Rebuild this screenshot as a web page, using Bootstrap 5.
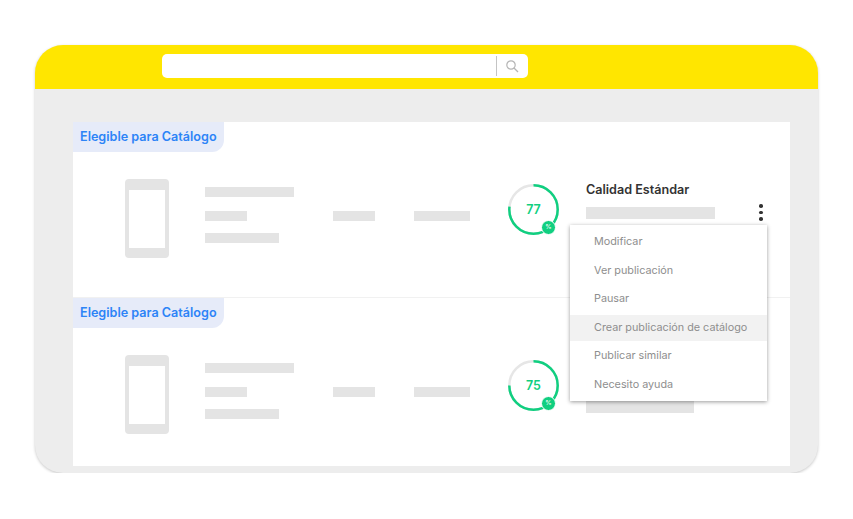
<!DOCTYPE html>
<html lang="es">
<head>
  <meta charset="UTF-8" />
  <meta name="viewport" content="width=device-width, initial-scale=1" />
  <title>Elegible para Catálogo</title>
  <link href="https://cdn.jsdelivr.net/npm/bootstrap@5.3.3/dist/css/bootstrap.min.css" rel="stylesheet" />
  <style>
    body {
      background: #fff;
      padding: 45px 35px 0;
      font-family: "Inter", "Liberation Sans", sans-serif;
    }
    .ventana {
      width: 783px;
      height: 428px;
      background: #ededed;
      border-radius: 28px;
      box-shadow: 0 1px 3px rgba(0,0,0,0.22);
      overflow: hidden;
    }
    .cabecera {
      height: 44px;
      background: #ffe600;
      padding: 9px 0 0 127px;
    }
    .buscador {
      width: 366px;
      height: 24px;
      background: #fff;
      border-radius: 5px;
      padding-right: 9px;
    }
    .buscador-linea {
      width: 1.5px;
      height: 20px;
      background: #c4c4c4;
      margin-right: 8px;
    }
    .panel {
      margin: 33px 28px 0 38px;
      height: 344px;
      background: #fff;
    }
    .fila { height: 176px; }
    .fila + .fila { height: 168px; }
    .fila-sep { border-bottom: 1px solid #f1f1f1; }
    .etiqueta {
      width: 151px;
      height: 30px;
      background: #e6ebf9;
      color: #2d84f7;
      font-size: 12.6px;
      font-weight: 600;
      line-height: 30px;
      padding-left: 7px;
      border-bottom-right-radius: 12px;
      white-space: nowrap;
    }
    .fila-cuerpo { padding: 27px 0 0 52px; }
    .telefono {
      width: 44px;
      height: 79px;
      background: #e4e4e4;
      border-radius: 4px;
      padding: 11px 4px 10px;
    }
    .telefono-pantalla { height: 100%; background: #fff; }
    .barra { background: #e4e4e4; height: 10px; }
    .col-textos { width: 89px; margin-left: 36px; padding-top: 8px; }
    .col-textos .barra + .barra { margin-top: 14px; }
    .col-textos .barra + .barra + .barra { margin-top: 12px; }
    .col-dato { margin-left: 39px; padding-top: 32px; }
    .anillo-caja { width: 51px; height: 51px; margin: 5px 0 0 38px; }
    .anillo-valor {
      color: #10cf80;
      font-size: 12.5px;
      font-weight: 600;
      padding-top: 2px;
    }
    .anillo-signo {
      right: 3px;
      bottom: 0;
      width: 15px;
      height: 15px;
      background: #10cf80;
      border: 1.5px solid #fff;
      border-radius: 50%;
      color: #fff;
      font-size: 6.5px;
      line-height: 12px;
      text-align: center;
    }
    .col-calidad { width: 179px; margin-left: 27px; }
    .calidad-titulo {
      color: #333;
      font-size: 12.6px;
      font-weight: 600;
      line-height: 22px;
    }
    .calidad-linea { margin-top: 6px; }
    .puntos { width: 4px; margin: -3px 2px 0 0; }
    .puntos span {
      display: block;
      width: 3.5px;
      height: 3.5px;
      background: #333;
      border-radius: 50%;
      margin-bottom: 3px;
    }
    .menu-acciones.dropdown-menu {
      left: 497px;
      top: 102.5px;
      width: 196.5px;
      height: 176.5px;
      padding: 4.5px 0 0;
      border: 0;
      border-radius: 0;
      box-shadow: 0 1px 4px rgba(0,0,0,0.4);
    }
    .menu-acciones .dropdown-item {
      height: 26px;
      margin-bottom: 2.6px;
      line-height: 25.5px;
      padding: 0 0 0 24px;
      color: #8e8e8e;
      font-size: 10.8px;
    }
    .menu-acciones .dropdown-item.activo { background: #f2f2f2; }
  </style>
</head>
<body>

  <div class="ventana">
    <div class="cabecera">
      <div class="buscador d-flex align-items-center justify-content-end">
        <div class="buscador-linea"></div>
        <svg width="14" height="14" viewBox="0 0 14 14" fill="none" stroke="#b5b5b5" stroke-width="1.2">
          <circle cx="6" cy="6" r="4.2" />
          <path d="M9 9l4 4" />
        </svg>
      </div>
    </div>

    <div class="panel position-relative">
      <div class="fila fila-sep">
        <div class="etiqueta">Elegible para Catálogo</div>
        <div class="fila-cuerpo d-flex align-items-start">
          <div class="telefono"><div class="telefono-pantalla"></div></div>
          <div class="col-textos">
            <div class="barra"></div>
            <div class="barra" style="width: 42px"></div>
            <div class="barra" style="width: 74px"></div>
          </div>
          <div class="col-dato"><div class="barra" style="width: 42px"></div></div>
          <div class="col-dato"><div class="barra" style="width: 56px"></div></div>
          <div class="anillo-caja position-relative d-flex align-items-center justify-content-center">
            <svg class="position-absolute top-0 start-0" width="51" height="51" viewBox="0 0 51 51" fill="none" stroke-width="2.5">
              <circle cx="25.5" cy="25.5" r="24.2" stroke="#e6e6e6" />
              <circle cx="25.5" cy="25.5" r="24.2" stroke="#10cf80" pathLength="100" stroke-dasharray="77 100" transform="rotate(-90 25.5 25.5)" />
            </svg>
            <span class="anillo-valor">77</span>
            <span class="anillo-signo position-absolute">%</span>
          </div>
          <div class="col-calidad">
            <div class="calidad-titulo">Calidad Estándar</div>
            <div class="calidad-linea d-flex justify-content-between align-items-start">
              <div class="barra" style="width: 129px; height: 12px"></div>
              <div class="puntos"><span></span><span></span><span></span></div>
            </div>
          </div>
        </div>
      </div>

      <div class="fila">
        <div class="etiqueta">Elegible para Catálogo</div>
        <div class="fila-cuerpo d-flex align-items-start">
          <div class="telefono"><div class="telefono-pantalla"></div></div>
          <div class="col-textos">
            <div class="barra"></div>
            <div class="barra" style="width: 42px"></div>
            <div class="barra" style="width: 74px"></div>
          </div>
          <div class="col-dato"><div class="barra" style="width: 42px"></div></div>
          <div class="col-dato"><div class="barra" style="width: 56px"></div></div>
          <div class="anillo-caja position-relative d-flex align-items-center justify-content-center">
            <svg class="position-absolute top-0 start-0" width="51" height="51" viewBox="0 0 51 51" fill="none" stroke-width="2.5">
              <circle cx="25.5" cy="25.5" r="24.2" stroke="#e6e6e6" />
              <circle cx="25.5" cy="25.5" r="24.2" stroke="#10cf80" pathLength="100" stroke-dasharray="75 100" transform="rotate(-90 25.5 25.5)" />
            </svg>
            <span class="anillo-valor">75</span>
            <span class="anillo-signo position-absolute">%</span>
          </div>
          <div class="col-calidad">
            <div class="barra" style="width: 108px; height: 12px; margin-top: 46px"></div>
          </div>
        </div>
      </div>

      <ul class="menu-acciones dropdown-menu show position-absolute list-unstyled m-0">
        <li><a class="dropdown-item" href="#">Modificar</a></li>
        <li><a class="dropdown-item" href="#">Ver publicación</a></li>
        <li><a class="dropdown-item" href="#">Pausar</a></li>
        <li><a class="dropdown-item activo" href="#">Crear publicación de catálogo</a></li>
        <li><a class="dropdown-item" href="#">Publicar similar</a></li>
        <li><a class="dropdown-item" href="#">Necesito ayuda</a></li>
      </ul>
    </div>
  </div>

  <script src="https://cdn.jsdelivr.net/npm/bootstrap@5.3.3/dist/js/bootstrap.bundle.min.js"></script>
</body>
</html>
